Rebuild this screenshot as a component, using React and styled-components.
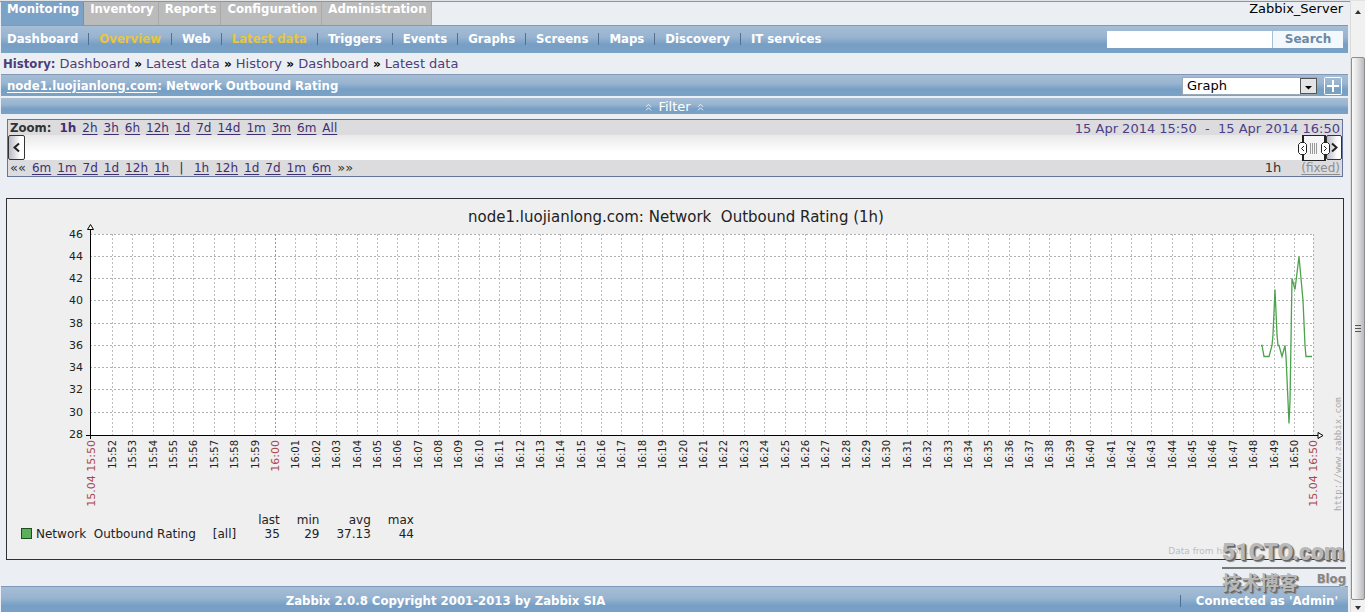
import React from 'react';
import styled, { createGlobalStyle, css } from 'styled-components';

const GlobalStyle = createGlobalStyle`
  * { box-sizing: border-box; }
  body {
    margin: 0;
    background: #ebeff3;
    color: #111;
    font-family: "DejaVu Sans", Verdana, sans-serif;
    font-size: 13px;
    line-height: 16px;
  }
`;

const condensed = css`
  font-family: "DejaVu Sans Condensed", "DejaVu Sans", Tahoma, sans-serif;
  font-weight: bold;
`;

const blueBar = css`
  background: linear-gradient(#a6bdd6, #98b4d0 40%, #779fc5 68%, #7aa2c4);
`;

const Window = styled.div`
  display: flex;
  min-height: 100vh;
  border-top: 1px solid #dfe3e6;
`;

const Page = styled.div`
  flex: 1;
  min-width: 0;
  display: flex;
  flex-direction: column;
  padding: 0 2px 0 1px;
  border-top: 1px solid #8d959e;
`;

const TopRow = styled.header`
  display: flex;
  justify-content: space-between;
  height: 23px;
`;

const Tabs = styled.nav`
  display: flex;
`;

const Tab = styled.a`
  ${condensed}
  padding: 0 4px 0 6px;
  border-right: 1px solid ${(p) => (p.$active ? '#6d93b8' : '#a9a9a9')};
  background: ${(p) => (p.$active ? '#7ba2c7' : '#bbbbbb')};
  color: #fff;
  line-height: 14px;
  text-decoration: none;
`;

const ServerName = styled.span`
  padding-right: 5px;
  line-height: 14px;
  color: #000;
`;

const MenuBar = styled.div`
  ${blueBar}
  display: flex;
  align-items: center;
  justify-content: space-between;
  height: 28px;
  padding: 0 5px 0 6px;
  border-top: 1px solid #7f9ab6;
`;

const Menu = styled.nav`
  display: flex;
  align-items: center;
  padding-bottom: 2px;
`;

const MenuLink = styled.a`
  ${condensed}
  color: ${(p) => (p.$visited ? '#e8c63c' : '#fff')};
  text-decoration: none;

  &:not(:first-child)::before {
    content: '';
    display: inline-block;
    width: 1px;
    height: 12px;
    margin: 0 10px;
    background: #4f7092;
    vertical-align: -2px;
  }
`;

const SearchForm = styled.form`
  display: flex;
  height: 17px;
`;

const SearchInput = styled.input`
  width: 165px;
  padding: 0 4px;
  border: 0;
  background: #fff;
`;

const SearchButton = styled.button`
  width: 71px;
  padding: 0;
  border: 0;
  border-left: 1px solid #a9bfd4;
  background: #f3f8fc;
  color: #6b89a5;
  font: bold 12px/17px "DejaVu Sans", sans-serif;
`;

const Breadcrumb = styled.nav`
  height: 21px;
  padding: 3px 2px 2px;
  color: #4b3f78;
  white-space: pre;
`;

const Crumb = styled.a`
  color: #4b3f78;
  text-decoration: none;
`;

const Chevron = styled.b`
  color: #000;
  font-size: 12px;
`;

const TitleBar = styled.div`
  ${blueBar}
  display: flex;
  align-items: center;
  justify-content: space-between;
  height: 22px;
  padding: 0 6px;
  border-top: 1px solid #8199b5;
`;

const Title = styled.h1`
  ${condensed}
  margin: 0;
  font-size: 13px;
  color: #fff;

  a {
    color: #fff;
    text-underline-offset: 2px;
  }
`;

const TitleTools = styled.div`
  display: flex;
  align-items: center;
  gap: 7px;
`;

const SelectBox = styled.div`
  position: relative;
  width: 135px;
  height: 18px;

  svg {
    position: absolute;
    top: 1px;
    right: 0;
    pointer-events: none;
  }
`;

const Select = styled.select`
  appearance: none;
  width: 100%;
  height: 18px;
  padding: 0 4px;
  border: 1px solid #9aa9b8;
  border-radius: 0;
  background: #fff;
  color: #000;
  font: 13px/16px "DejaVu Sans", sans-serif;
`;

const AddButton = styled.button`
  width: 18px;
  height: 18px;
  padding: 0;
  border: 0;
  background: transparent;
  line-height: 0;
`;

const FilterBar = styled.button`
  ${blueBar}
  display: flex;
  align-items: center;
  justify-content: center;
  gap: 6px;
  width: 100%;
  height: 16px;
  margin: 2px 0 5px;
  padding: 1px 0 0;
  border: 0;
  color: #fff;
  font: 13px/15px "DejaVu Sans", sans-serif;
`;

const Timeline = styled.section`
  margin: 0 5px 0 6px;
  border: 1px solid #66749a;
  background: #dcdcde;
`;

const TimeRow = styled.div`
  display: flex;
  justify-content: space-between;
  height: ${(p) => (p.$tall ? 16 : 15)}px;
  padding: 0 2px;
  color: #333;
`;

const Group = styled.div`
  display: flex;
  gap: ${(p) => p.$gap || 6}px;
`;

const Label = styled.b`
  ${condensed}
  margin-right: ${(p) => (p.$wide ? 4 : 2)}px;
`;

const TimeLink = styled.a`
  font-size: 12px;
  line-height: 16px;
  font-weight: ${(p) => (p.$current ? 'bold' : 'normal')};
  color: ${(p) => (p.$muted ? '#8e8e8e' : '#3e3072')};
  text-decoration: ${(p) => (p.$current ? 'none' : 'underline')};
  text-underline-offset: 2px;
`;

const Period = styled.span`
  line-height: 17px;
  color: #4b3f86;
  white-space: pre;
`;

const Small = styled.span`
  line-height: 16px;
`;

const Slider = styled.div`
  display: flex;
  justify-content: space-between;
  height: 25px;
  background: linear-gradient(#e9e9e9, #fff 70%);
`;

const ArrowButton = styled.button`
  position: relative;
  width: ${(p) => (p.$slim ? 16 : 17)}px;
  height: 25px;
  padding: 0;
  border: 1px solid #333;
  border-radius: 2px;
  background: linear-gradient(90deg, #b9bac6, #fff 75%);
  line-height: 0;
`;

const SliderEnd = styled.div`
  display: flex;
`;

const Handle = styled.div`
  position: relative;
  z-index: 1;
  width: 24px;
  height: 26px;
  border: 1px solid #222;
  border-width: 1px 2px;
  background: #f6f6f6;

  svg {
    position: absolute;
    top: 5px;
    left: -6px;
  }
`;

const GraphPanel = styled.section`
  position: relative;
  margin: 21px 4px 26px 5px;
  border: 1px solid #2d3038;
  background: #efefef;
`;

const Plot = styled.svg`
  display: block;
  width: 100%;
  height: auto;
`;

const Legend = styled.table`
  margin-left: 14px;
  border-collapse: collapse;
  font-size: 12px;
  line-height: 14px;
  color: #222;

  th, td {
    padding: 0 0 0 17px;
    font-weight: normal;
    text-align: right;
    white-space: pre;
  }
  th:first-child, td:first-child { padding: 0; text-align: left; }
  th:nth-child(3), td:nth-child(3) { padding-left: 22px; }
`;

const Swatch = styled.span`
  display: inline-block;
  width: 11px;
  height: 11px;
  margin-right: 4px;
  border: 1px solid #1e4f1e;
  background: #5cb05c;
  vertical-align: -1px;
`;

const Source = styled.div`
  height: 18px;
  padding: 3px 94px 0 0;
  font-size: 9px;
  line-height: 14px;
  text-align: right;
  color: #bdbdbd;
`;

const Watermark = styled.div`
  position: absolute;
  right: -3px;
  bottom: -36px;
  width: 124px;
  color: #b8b8b8;
  font-weight: bold;
  text-shadow: 1px 1px 0 #666, 2px 2px 1px #777;
`;

const MarkName = styled.div`
  border-bottom: 2px solid #777;
  font-family: Roboto, "Liberation Sans", sans-serif;
  font-weight: 900;
  font-size: 23px;
  line-height: 28px;
`;

const MarkSub = styled.div`
  display: flex;
  justify-content: space-between;
  font: bold 19px/26px "Noto Sans CJK SC", sans-serif;

  small {
    color: #858585;
    font: bold 13px/20px "DejaVu Sans Condensed", "DejaVu Sans", sans-serif;
    text-shadow: 1px 1px 0 #ccc;
  }
`;

const Footer = styled.footer`
  ${blueBar}
  ${condensed}
  display: grid;
  grid-template-columns: 66% 1fr;
  flex: 1;
  min-height: 26px;
  border-top: 1px solid #7f9ab6;
  color: #fff;
  line-height: 27px;
`;

const Copyright = styled.div`
  text-align: center;
`;

const Connected = styled.div`
  display: flex;
  align-items: center;
  justify-content: flex-end;
  gap: 15px;
  padding-right: 10px;

  &::before {
    content: '';
    width: 1px;
    height: 12px;
    background: #4f7092;
  }
`;

const ScrollBar = styled.aside`
  display: flex;
  flex-direction: column;
  align-items: center;
  width: 15px;
  border-left: 1px solid #d9dbdd;
  background: #f1f1f1;
`;

const ScrollEnd = styled.span`
  display: flex;
  align-items: flex-start;
  justify-content: center;
  height: ${(p) => p.$size}px;
  padding-top: ${(p) => p.$inset}px;
`;

const Thumb = styled.span`
  display: flex;
  align-items: center;
  justify-content: center;
  flex: 1;
  width: 14px;
  border: 1px solid #8d8d90;
  border-radius: 2px;
  background: linear-gradient(90deg, #fafafa, #e2e2e4 45%, #b9babd);
`;

const LEFT = 83;
const RIGHT = 1306;
const TOP = 35;
const BOTTOM = 236;
const levels = [46, 44, 42, 40, 38, 36, 34, 32, 30, 28];
const yOf = (v) => Math.floor(TOP + ((46 - v) * 200.5) / 18);
const minutes = Array.from({ length: 59 }, (_, i) => i - 8);
const xOf = (m) => Math.round(268 + m * 20.38);
const clock = (m) =>
  m < 0 ? `15:${60 + m}` : `16:${String(m).padStart(2, '0')}`;

const samples = [
  [1254, 36], [1255, 36], [1257, 35], [1262, 35], [1265, 36], [1266, 37], [1268, 41],
  [1270, 37], [1271, 36], [1272, 36], [1275, 35], [1278, 36], [1279, 35], [1280, 33],
  [1282, 29], [1283, 31], [1285, 42], [1288, 41], [1292, 44], [1294, 42],
  [1296, 40], [1298, 36], [1299, 35], [1305, 35],
];

function Chart() {
  return (
    <Plot viewBox="0 0 1336 314" fontFamily="DejaVu Sans, sans-serif" role="img" aria-label="Network Outbound Rating">
      <text x="669" y="23" fontSize="15" textAnchor="middle" fill="#222" style={{ whiteSpace: 'pre' }}>
        {'node1.luojianlong.com: Network  Outbound Rating (1h)'}
      </text>
      <rect x={LEFT} y={TOP} width={RIGHT - LEFT} height={BOTTOM - TOP} fill="#fff" />
      <g stroke="#b0b0b0" strokeDasharray="2 2" shapeRendering="crispEdges">
        {levels.slice(0, -1).map((v) => (
          <line key={v} x1={LEFT} x2={RIGHT} y1={yOf(v) + 0.5} y2={yOf(v) + 0.5} />
        ))}
        {minutes.map((m) => (
          <line key={m} x1={xOf(m) + 0.5} x2={xOf(m) + 0.5} y1={TOP} y2={BOTTOM} stroke={m === 0 ? '#9a9a9a' : '#bdbdbd'} />
        ))}
        <line x1={RIGHT + 0.5} x2={RIGHT + 0.5} y1={TOP} y2={BOTTOM} />
      </g>
      <g fontSize="11" fill="#222" textAnchor="end">
        {levels.map((v) => (
          <text key={v} x="76" y={yOf(v) + 4}>{v}</text>
        ))}
      </g>
      {minutes.map((m) => (
        <text
          key={m}
          transform={`translate(${xOf(m) + 4} 241) rotate(-90)`}
          fontSize={m === 0 ? 11 : 10}
          fill={m === 0 ? '#a8484c' : '#222'}
          textAnchor="end"
        >
          {clock(m)}
        </text>
      ))}
      <g fontSize="11" fill="#a8484c" textAnchor="end">
        <text transform={`translate(${LEFT + 5} 241) rotate(-90)`}>15.04 15:50</text>
        <text transform={`translate(${RIGHT + 4} 241) rotate(-90)`}>15.04 16:50</text>
      </g>
      <text transform="translate(1334 312) rotate(-90)" fontSize="9" fontFamily="DejaVu Sans Mono, monospace" fill="#aaa">
        http://www.zabbix.com
      </text>
      <polyline
        points={samples.map(([x, v]) => `${x},${yOf(v) + 0.5}`).join(' ')}
        fill="none"
        stroke="#4ba34b"
        strokeWidth="1.3"
      />
      <g stroke="#000" fill="none">
        <path d={`M${LEFT + 0.5} 30V240M79 ${BOTTOM + 0.5}H1311`} />
        <path d={`M${LEFT + 0.5} 25.5L${LEFT - 2.5} 30.5H${LEFT + 3.5}Z`} fill="#fff" />
        <path d={`M1316 ${BOTTOM + 0.5}L1311 ${BOTTOM - 2.5}V${BOTTOM + 3.5}Z`} fill="#fff" />
      </g>
    </Plot>
  );
}

const Angle = ({ right }) => (
  <svg width="9" height="11" viewBox="0 0 9 11" fill="none" stroke="#222" strokeWidth="2">
    <path d={right ? 'M2 1.5L6.5 5.5L2 9.5' : 'M7 1.5L2.5 5.5L7 9.5'} />
  </svg>
);

const DoubleUp = () => (
  <svg width="7" height="8" viewBox="0 0 7 8" fill="none" stroke="#e9f1f8">
    <path d="M1 3.8L3.5 1.3L6 3.8M1 7.3L3.5 4.8L6 7.3" />
  </svg>
);

const tabs = ['Monitoring', 'Inventory', 'Reports', 'Configuration', 'Administration'];
const menu = ['Dashboard', 'Overview', 'Web', 'Latest data', 'Triggers', 'Events', 'Graphs', 'Screens', 'Maps', 'Discovery', 'IT services'];
const visited = ['Overview', 'Latest data'];
const crumbs = ['Dashboard', 'Latest data', 'History', 'Dashboard', 'Latest data'];
const zooms = ['1h', '2h', '3h', '6h', '12h', '1d', '7d', '14d', '1m', '3m', '6m', 'All'];
const back = ['6m', '1m', '7d', '1d', '12h', '1h'];
const forward = ['1h', '12h', '1d', '7d', '1m', '6m'];

export default function App() {
  return (
    <Window>
      <GlobalStyle />
      <Page>
        <TopRow>
          <Tabs>
            {tabs.map((t, i) => (
              <Tab key={t} href="#" $active={i === 0}>{t}</Tab>
            ))}
          </Tabs>
          <ServerName>Zabbix_Server</ServerName>
        </TopRow>
        <MenuBar>
          <Menu>
            {menu.map((t) => (
              <MenuLink key={t} href="#" $visited={visited.includes(t)}>{t}</MenuLink>
            ))}
          </Menu>
          <SearchForm>
            <SearchInput aria-label="Search" />
            <SearchButton type="button">Search</SearchButton>
          </SearchForm>
        </MenuBar>
        <Breadcrumb>
          <Label $wide>History:</Label>
          {crumbs.map((t, i) => (
            <React.Fragment key={i}>
              {i > 0 && <Chevron>{' » '}</Chevron>}
              <Crumb href="#">{t}</Crumb>
            </React.Fragment>
          ))}
        </Breadcrumb>
        <TitleBar>
          <Title><a href="#">node1.luojianlong.com</a>: Network Outbound Rating</Title>
          <TitleTools>
            <SelectBox>
              <Select aria-label="View">
                <option>Graph</option>
              </Select>
              <svg width="17" height="16" viewBox="0 0 17 16">
                <rect x="0.5" y="0.5" width="16" height="15" fill="#e4e4e4" stroke="#555" />
                <path d="M5 8H12L8.5 11.5Z" fill="#000" />
              </svg>
            </SelectBox>
            <AddButton aria-label="Add to favourites">
              <svg width="18" height="18" viewBox="0 0 18 18" fill="none" stroke="#fff">
                <rect x="0.5" y="0.5" width="17" height="17" rx="1" />
                <path d="M9 3V15M3 9H15" strokeWidth="2" />
              </svg>
            </AddButton>
          </TitleTools>
        </TitleBar>
        <FilterBar><DoubleUp />Filter<DoubleUp /></FilterBar>
        <Timeline>
          <TimeRow>
            <Group>
              <Label>Zoom:</Label>
              {zooms.map((z, i) => (
                <TimeLink key={z} href="#" $current={i === 0}>{z}</TimeLink>
              ))}
            </Group>
            <Period>{'15 Apr 2014 15:50  -  15 Apr 2014 16:50'}</Period>
          </TimeRow>
          <Slider>
            <ArrowButton aria-label="Earlier"><Angle /></ArrowButton>
            <SliderEnd>
              <Handle>
                <svg width="32" height="15" viewBox="0 0 32 15" fill="none">
                  <path d="M12.5 2V13M14.5 2V13M16.5 2V13M18.5 2V13" stroke="#999" />
                  <path d="M2.5 1.5H6.5L8.5 3.5V11.5L6.5 13.5H2.5L0.5 11.5V3.5ZM25.5 1.5H29.5L31.5 3.5V11.5L29.5 13.5H25.5L23.5 11.5V3.5Z" fill="#fff" stroke="#222" />
                  <path d="M6 5L3.5 7.5L6 10M26 5L28.5 7.5L26 10" stroke="#222" />
                </svg>
              </Handle>
              <ArrowButton $slim aria-label="Later"><Angle right /></ArrowButton>
            </SliderEnd>
          </Slider>
          <TimeRow $tall>
            <Group>
              <Small>««</Small>
              {back.map((z) => <TimeLink key={z} href="#">{z}</TimeLink>)}
              <Small>&nbsp;|&nbsp;</Small>
              {forward.map((z) => <TimeLink key={z} href="#">{z}</TimeLink>)}
              <Small>»»</Small>
            </Group>
            <Group $gap={20}>
              <Small>1h</Small>
              <TimeLink href="#" $muted>(fixed)</TimeLink>
            </Group>
          </TimeRow>
        </Timeline>
        <GraphPanel>
          <Chart />
          <Legend>
            <thead>
              <tr><th /><th /><th>last</th><th>min</th><th>avg</th><th>max</th></tr>
            </thead>
            <tbody>
              <tr>
                <td><Swatch />{'Network  Outbound Rating'}</td>
                <td>[all]</td><td>35</td><td>29</td><td>37.13</td><td>44</td>
              </tr>
            </tbody>
          </Legend>
          <Source>Data from history.</Source>
          <Watermark>
            <MarkName>51CTO.com</MarkName>
            <MarkSub>技术博客<small>Blog</small></MarkSub>
          </Watermark>
        </GraphPanel>
        <Footer>
          <Copyright>Zabbix 2.0.8 Copyright 2001-2013 by Zabbix SIA</Copyright>
          <Connected>Connected as 'Admin'</Connected>
        </Footer>
      </Page>
      <ScrollBar aria-hidden="true">
        <ScrollEnd $size={56} $inset={8}>
          <svg width="8" height="6" viewBox="0 0 8 6"><path d="M1 5H7L4 1Z" fill="#333" /></svg>
        </ScrollEnd>
        <Thumb>
          <svg width="6" height="8" viewBox="0 0 6 8" stroke="#555"><path d="M0 0.5H6M0 3.5H6M0 6.5H6" /></svg>
        </Thumb>
        <ScrollEnd $size={14} $inset={5}>
          <svg width="8" height="6" viewBox="0 0 8 6"><path d="M1 1H7L4 5Z" fill="#333" /></svg>
        </ScrollEnd>
      </ScrollBar>
    </Window>
  );
}
